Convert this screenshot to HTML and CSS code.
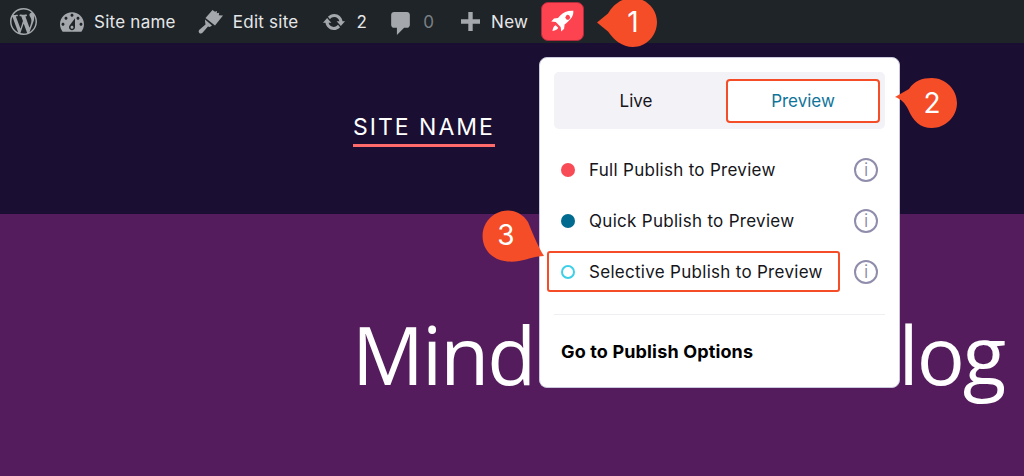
FILE: index.html
```html
<!DOCTYPE html>
<html lang="en">
<head>
<meta charset="utf-8">
<title>Publish menu</title>
<link rel="stylesheet" href="styles.css">
</head>
<body>
<div class="page">
  <header class="adminbar">
    <svg class="ic wp" viewBox="0 0 20 20"><path d="M20 10c0-5.51-4.49-10-10-10C4.48 0 0 4.49 0 10c0 5.52 4.48 10 10 10 5.51 0 10-4.48 10-10zM7.78 15.37L4.37 6.22c.55-.02 1.17-.08 1.17-.08.5-.06.44-1.13-.06-1.11 0 0-1.45.11-2.37.11-.18 0-.37 0-.58-.01C4.12 2.69 6.87 1.11 10 1.11c2.33 0 4.45.87 6.05 2.34-.68-.11-1.65.39-1.65 1.58 0 .74.45 1.36.9 2.1.35.61.55 1.36.55 2.46 0 1.49-1.4 5-1.4 5l-3.03-8.37c.54-.02.82-.17.82-.17.5-.05.44-1.25-.06-1.22 0 0-1.44.12-2.38.12-.87 0-2.33-.12-2.33-.12-.5-.03-.56 1.2-.06 1.22l.92.08 1.26 3.41zM17.41 10c.24-.64.74-1.87.43-4.25.7 1.29 1.05 2.71 1.05 4.25 0 3.29-1.73 6.24-4.4 7.78.97-2.59 1.94-5.2 2.92-7.78zM6.1 18.09C3.12 16.65 1.11 13.53 1.11 10c0-1.3.23-2.48.72-3.59C3.25 10.3 4.67 14.2 6.1 18.09zm4.03-6.63l2.58 6.98c-.86.29-1.76.45-2.71.45-.79 0-1.57-.11-2.29-.33.81-2.38 1.62-4.74 2.42-7.1z"/></svg>
    <svg class="ic dash" viewBox="2 3 16 13"><path d="M3.76 16h12.48c1.1-1.37 1.76-3.11 1.76-5 0-4.42-3.58-8-8-8s-8 3.58-8 8c0 1.89.66 3.63 1.76 5zM10 4c.55 0 1 .45 1 1s-.45 1-1 1-1-.45-1-1 .45-1 1-1zM6 6c.55 0 1 .45 1 1s-.45 1-1 1-1-.45-1-1 .45-1 1-1zm8 0c.55 0 1 .45 1 1s-.45 1-1 1-1-.45-1-1 .45-1 1-1zm-5.37 5.55L12 7v6c0 1.1-.9 2-2 2s-2-.9-2-2c0-.57.24-1.08.63-1.45zM4 10c.55 0 1 .45 1 1s-.45 1-1 1-1-.45-1-1 .45-1 1-1zm12 0c.55 0 1 .45 1 1s-.45 1-1 1-1-.45-1-1 .45-1 1-1zm-5 3c0-.55-.45-1-1-1s-1 .45-1 1 .45 1 1 1 1-.45 1-1z"/></svg>
    <span class="bar-text t-site">Site name</span>
    <svg class="ic brush" viewBox="0 0 26 26"><path d="M14.500 2l2.500 1.800 2-.8-.2 2.300 2.400-.6-.4 2.600 4.200.2-8 10L7.500 10zM7 11.500l7 6-2.200 1.500-1.800-.4-5.500 6.200c-.9 1-2.300 1-3.200.1-.9-.9-.8-2.200.1-3.100l6.100-5.300-.4-2.700z"/></svg>
    <span class="bar-text t-edit">Edit site</span>
    <svg class="ic upd" viewBox="0 2.500 20 15"><path d="M10.200 3.280c3.530 0 6.430 2.610 6.920 6h2.080l-3.500 4-3.500-4h2.320c-.45-1.970-2.210-3.440-4.320-3.440-1.450 0-2.730.71-3.540 1.780L4.950 5.660C6.230 4.200 8.110 3.280 10.200 3.280zm-.4 13.440c-3.520 0-6.430-2.610-6.920-6H.8l3.500-4c1.170 1.330 2.330 2.670 3.500 4H5.480c.45 1.970 2.210 3.440 4.320 3.440 1.450 0 2.730-.71 3.540-1.780l1.710 1.950c-1.280 1.460-3.150 2.390-5.250 2.390z"/></svg>
    <span class="bar-text t-upd">2</span>
    <svg class="ic cmt" viewBox="3 2 13 16"><path d="M5 2h9c1.100 0 2 .9 2 2v7c0 1.100-.9 2-2 2h-2l-5 5v-5H5c-1.100 0-2-.9-2-2V4c0-1.100.9-2 2-2z"/></svg>
    <span class="bar-text muted t-cmt">0</span>
    <svg class="ic plus" viewBox="4 2 13 13"><path d="M17 7v3h-5v5H9v-5H4V7h5V2h3v5h5z"/></svg>
    <span class="bar-text t-new">New</span>
    <button class="rocket" type="button" aria-label="Publish">
      <svg viewBox="0 0 30 30"><path d="M27 3c-6-.4-11 1.300-14.500 5.300L10 11.200l-4.500.5L2.500 15l5 .6 5.400 5.400.7 5 3.200-3 .5-4.600 2.800-2.400C24 12.500 27.500 9 27 3zM19 8.500a2.600 2.600 0 1 1 3.700 3.700A2.600 2.600 0 0 1 19 8.500zM7.400 19.200c-1.900.7-2.900 2.700-3.600 6.400 3.600-.7 5.700-1.700 6.400-3.600z"/></svg>
    </button>
  </header>

  <section class="site-head">
    <span class="site-title">SITE NAME</span>
  </section>

  <section class="hero">
    <h1>Mindblown: a blog</h1>
  </section>

  <div class="popup">
    <div class="tabs">
      <button class="tab" type="button">Live</button>
      <button class="tab active" type="button">Preview</button>
    </div>
    <ul class="rows">
      <li class="row"><span class="dot red"></span><span class="label">Full Publish to Preview</span><span class="info">i</span></li>
      <li class="row"><span class="dot teal"></span><span class="label">Quick Publish to Preview</span><span class="info">i</span></li>
      <li class="row marked"><span class="dot ring"></span><span class="label">Selective Publish to Preview</span><span class="info">i</span></li>
    </ul>
    <a class="options">Go to Publish Options</a>
  </div>

  <div class="callout c1"><svg viewBox="0 0 62 50"><path d="M1 22.500 12 13.500C17 5 25 -2 37 -2 50 -2 61 9 61 22 61 36 50 47 37 47 26 47 18 40 12 31.500Z"/></svg><span>1</span></div>
  <div class="callout c2"><svg viewBox="0 0 64 52"><path d="M1 20 15 12C20 4 28 1 38 1 51 1 63 12 63 26 63 40 51 51 38 51 26 51 19 44 14 32 11 26 7 22 1 20Z"/></svg><span>2</span></div>
  <div class="callout c3"><svg viewBox="0 0 64 54"><path d="M63 47C55 47 48 50 38 52 27 54 12 52 5 40 -2 28 2 12 14 5 27 -2 40 2 47 13 50 20 56 36 63 47Z"/></svg><span>3</span></div>
</div>
</body>
</html>
```

FILE: styles.css
```css
*, *::before { box-sizing: border-box; }
html, body { margin: 0; height: 100%; }
body { font-family: Inter, "Noto Sans", sans-serif; overflow: hidden; }

.page { position: relative; width: 1024px; height: 476px; display: flex; flex-direction: column; overflow: hidden; background: #541c5c; }

.adminbar { height: 43px; flex: none; background: #1e2428; display: flex; align-items: center; padding-left: 10px; color: #e6e7e8; }
.ic { fill: #a4a8ac; flex: none; display: block; }
.wp { width: 27px; height: 27px; }
.dash { width: 24px; height: 20px; margin-left: 23px; }
.brush { width: 26px; height: 26px; margin-left: 22px; margin-top: -2px; }
.upd { width: 24px; height: 18px; margin-left: 23px; }
.cmt { width: 19px; height: 23px; margin-left: 24px; margin-top: 3px; }
.plus { width: 19px; height: 19px; margin-left: 27px; }
.bar-text { font-size: 17px; line-height: 20px; letter-spacing: .25px; white-space: nowrap; }
.muted { color: #7b8085; }
.t-site { margin-left: 10px; }
.t-edit { margin-left: 9px; }
.t-upd { margin-left: 11px; }
.t-cmt { margin-left: 13px; }
.t-new { margin-left: 11px; }
.rocket { width: 43px; height: 39px; margin-left: 13px; padding: 0; border: 1.500px solid #b52a3c; border-radius: 7px; background: #fd4350; display: flex; align-items: center; justify-content: center; }
.rocket svg { width: 27px; height: 27px; fill: #fff; }

.site-head { height: 171px; flex: none; background: #1a0e33; padding: 70px 0 0 353px; }
.site-title { display: inline-block; color: #fff; font-size: 23px; line-height: 28px; letter-spacing: 2px; padding-bottom: 3px; border-bottom: 3px solid #ff6a6a; }

.hero { flex: 1; padding: 93px 0 0 352px; }
.hero h1 { margin: 0; color: #fff; font-family: "Open Sans", sans-serif; font-size: 80px; line-height: 94px; font-weight: 400; letter-spacing: -2px; white-space: nowrap; }

.popup { position: absolute; left: 539px; top: 57px; width: 361px; height: 331px; background: #fff; border: 1px solid #c9c8dc; border-radius: 8px; padding: 14px 14px 0; }
.tabs { height: 57px; background: #f2f2f7; border-radius: 5px; display: flex; align-items: center; padding: 0 5px 0 0; }
.tab { border: 0; background: none; font: inherit; font-size: 17px; padding: 0 8px 0 0; color: #15151a; flex: 1; height: 44px; }
.tab.active { flex: 0 0 154px; padding: 0; background: #fff; color: #10749a; border: 2px solid #f44d27; border-radius: 4px; }

.rows { list-style: none; margin: 15px 0 0; padding: 0; height: 171px; border-bottom: 1px solid #eeeef5; }
.row { height: 51px; display: flex; align-items: center; position: relative; padding-left: 7px; }
.dot { width: 14px; height: 14px; border-radius: 50%; flex: none; }
.red { background: #f84b55; }
.teal { background: #006a8f; }
.ring { border: 2px solid #3cd0e8; }
.label { margin-left: 14px; font-size: 17px; letter-spacing: .29px; color: #15151a; white-space: nowrap; }
.info { position: absolute; left: 300px; top: 14px; width: 24px; height: 24px; border: 2px solid #8f8dab; border-radius: 50%; color: #7f7d9c; font-size: 18px; line-height: 20px; text-align: center; font-weight: 300; }
.marked::before { content: ""; position: absolute; left: -7px; top: 5px; width: 293px; height: 41px; border: 2px solid #f44d27; border-radius: 3px; }

.options { display: block; margin: 25px 0 0 7px; font-size: 18px; line-height: 24px; font-weight: 700; letter-spacing: .15px; color: #000; white-space: nowrap; }

.callout { position: absolute; }
.callout svg { position: absolute; inset: 0; width: 100%; height: 100%; fill: #f44d27; overflow: visible; }
.callout span { position: absolute; color: #fff; font-size: 28px; line-height: 34px; width: 50px; text-align: center; }
.c1 { left: 596px; top: 0; width: 62px; height: 50px; }
.c1 span { left: 12px; top: 5px; }
.c2 { left: 894px; top: 77px; width: 64px; height: 52px; }
.c2 span { left: 13px; top: 9px; }
.c3 { left: 481px; top: 209px; width: 64px; height: 54px; }
.c3 span { left: 0; top: 9px; }
```
